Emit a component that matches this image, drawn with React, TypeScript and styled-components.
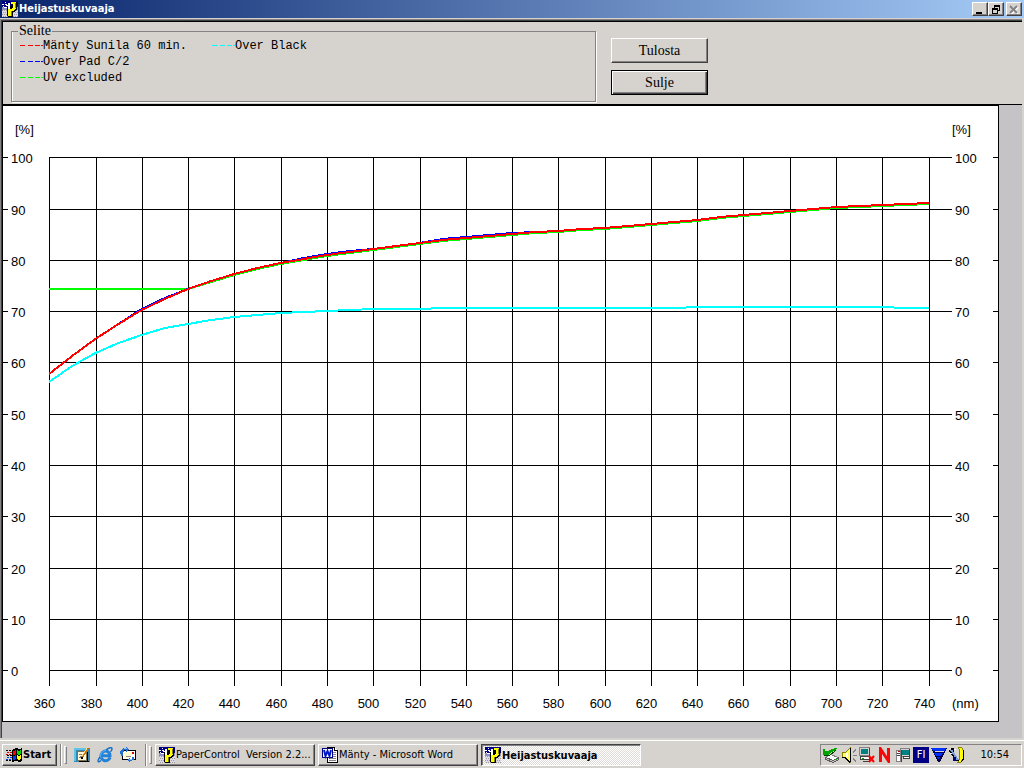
import React from "react";
import styled, { createGlobalStyle, css } from "styled-components";

const FACE = "#d6d3ce";
const NAVY = "#08246b";
const UI = `"DejaVu Sans Condensed", "DejaVu Sans", sans-serif`;
const SERIF = `"Liberation Serif", serif`;

const Global = createGlobalStyle`
  *, *::before, *::after { box-sizing: border-box; }
  body { margin: 0; background: ${FACE}; color: #000; font: 11px ${UI}; }
  button { font: inherit; color: inherit; margin: 0; padding: 0; border-radius: 0; }
  svg { display: block; flex: none; }
`;

const raised = css`
  border: 1px solid;
  border-color: #fff #424142 #424142 #fff;
  box-shadow: inset -1px -1px #848284;
  background: ${FACE};
`;

const Desktop = styled.div`
  min-height: 100vh;
  display: flex;
  flex-direction: column;
`;

const TitleBar = styled.header`
  height: 18px;
  display: flex;
  align-items: center;
  gap: 1px;
  padding: 0 2px;
  background: linear-gradient(90deg, ${NAVY}, #a5cbf7);
`;

const Title = styled.h1`
  flex: 1;
  margin: 0;
  color: #fff;
  font-size: 11px;
  line-height: 18px;
`;

const Controls = styled.div`
  display: flex;
`;

const ControlButton = styled.button<{ $apart?: boolean }>`
  ${raised}
  width: 16px;
  height: 14px;
  display: grid;
  place-items: center;
  margin-left: ${(p) => (p.$apart ? 2 : 0)}px;
`;

const Workspace = styled.main`
  flex: 1;
  margin: 1px 2px 0 0;
  padding-bottom: 16px;
  border: solid #848284;
  border-width: 1px 0 0 1px;
  box-shadow: inset 1px 1px #424142;
  padding-left: 1px;
  padding-top: 1px;
  background: #c6c3c6;
`;

const Panel = styled.section`
  display: flex;
  gap: 15px;
  min-height: 84px;
  padding: 2px 8px;
  background: ${FACE};
  border: solid #000;
  border-width: 1px 0 1px 1px;
`;

const LegendBox = styled.fieldset`
  flex: 0 1 585px;
  min-width: 0;
  height: 78px;
  margin: 0;
  padding: 0 7px;
  border: 1px solid #848284;
  box-shadow: 1px 1px #fff, inset 1px 0 #fff;
`;

const LegendTitle = styled.legend`
  margin-left: -1px;
  padding: 0 1px;
  background: ${FACE};
  font: 14px/14px ${SERIF};
`;

const LegendColumns = styled.ul`
  display: grid;
  grid-template: repeat(3, 16px) / 192px 1fr;
  grid-auto-flow: column;
  margin: 0;
  padding: 0 0 0 1px;
  list-style: none;
`;

const LegendItem = styled.li`
  display: flex;
  align-items: center;
  font: 12px/16px "Liberation Mono", monospace;
  white-space: pre;
`;

const Actions = styled.div`
  display: flex;
  flex-direction: column;
  gap: 7px;
  padding-top: 14px;
`;

const PushButton = styled.button<{ $default?: boolean }>`
  ${raised}
  width: 97px;
  height: 25px;
  font: 14px/20px ${SERIF};
  ${(p) =>
    p.$default &&
    css`
      border-color: #000;
      box-shadow: inset 1px 1px #fff, inset -1px -1px #424142, inset -2px -2px #848284;
    `}
`;

const Sheet = styled.section`
  margin-right: 23px;
  background: #fff;
  border: 1px solid #000;
`;

const Plot = styled.svg`
  width: 100%;
  height: auto;
  font: 13px "Liberation Sans", sans-serif;
`;

const Taskbar = styled.footer`
  height: 30px;
  display: flex;
  align-items: center;
  gap: 3px;
  padding: 3px 2px 0;
  background: ${FACE};
  box-shadow: inset 0 2px ${FACE}, inset 0 3px #fff;
`;

const TaskButton = styled.button<{ $active?: boolean }>`
  ${raised}
  flex: 0 1 160px;
  min-width: 0;
  height: 22px;
  display: flex;
  align-items: center;
  gap: 1px;
  padding: 0 3px;
  white-space: pre;
  overflow: hidden;
  ${(p) =>
    p.$active &&
    css`
      font-weight: bold;
      border-color: #424142 #fff #fff #424142;
      box-shadow: inset 1px 1px #848284;
      background: repeating-conic-gradient(#fff 0 25%, #dedbd6 0 50%) 0 0 / 2px 2px;
      padding-top: 1px;
    `}
`;

const StartButton = styled(TaskButton)`
  flex: 0 0 55px;
  font-weight: bold;
`;

const Grip = styled.div`
  width: 7px;
  height: 22px;
  display: flex;
  justify-content: space-between;
  &::before {
    content: "";
    width: 2px;
    background: linear-gradient(90deg, #848284 50%, #fff 50%);
  }
  &::after {
    content: "";
    width: 3px;
    margin: 2px 0;
    border: 1px solid;
    border-color: #fff #848284 #848284 #fff;
  }
`;

const QuickLaunch = styled.nav`
  display: flex;
  gap: 7px;
  width: 72px;
  padding-left: 4px;
`;

const QuickButton = styled.button`
  border: 0;
  background: none;
`;

const Tray = styled.aside`
  display: flex;
  align-items: center;
  gap: 2px;
  margin-left: auto;
  width: 202px;
  height: 22px;
  padding-left: 2px;
  border: 1px solid;
  border-color: #848284 #fff #fff #848284;
`;

const Language = styled.span`
  width: 16px;
  height: 16px;
  background: #000084;
  color: #fff;
  text-align: center;
  line-height: 16px;
`;

const Clock = styled.time`
  flex: 1;
  padding-right: 12px;
  text-align: right;
`;

function AppIcon() {
  return (
    <svg width="16" height="16" viewBox="0 0 16 16" shapeRendering="crispEdges">
      <path fill="#000084" d="M0 0h16v6H0z" />
      <path fill="#8c8ec6" d="M0 6h16v3H0z" />
      <path fill="#dedbe7" d="M0 9h16v7H0z" />
      <path stroke="#9c9a9c" strokeDasharray="1 1" d="M0 9.500h16M1 11.500h15M0 13.500h16M1 15.500h15" />
      <path stroke="#fff" d="M0 3.500h2M3 3.500h2M3 1.500h1M2 6.500h3M1 5.500h1" />
      <path fill="#000" d="M9 1h5l1 1v6l-2 3h-2v4l-1 1H6l-1-1V5h4z" />
      <path fill="#ffff00" d="M9 1h4l1 1v5l-2 3h-2v5H6V8h3l2-2V3H9z" />
      <path fill="#848200" d="M13 2h1v5h-1zM9 10h1v5H9z" />
      <path fill="#fff" d="M6 2h2v6H6zM4 4h3v1H4z" />
    </svg>
  );
}

function WindowsIcon() {
  return (
    <svg width="16" height="16" viewBox="0 0 16 16" shapeRendering="crispEdges">
      <path fill="#000" d="M6 3l4-2 3 1 3-1v13l-3 1-3-1-4 1z" />
      <path fill="#ff0000" d="M7 4l3-1v4L7 8z" />
      <path fill="#00e000" d="M11 3l2 1 2-1v4l-2 1-2-1z" />
      <path fill="#0041ff" d="M7 9l3-1v4l-3 1z" />
      <path fill="#ffff00" d="M11 8l2 1 2-1v4l-2 1-2-1z" />
      <path stroke="#000" strokeDasharray="2 1" d="M0 3.500h6M1 8.500h5M0 13.500h6" />
      <path stroke="#e00000" strokeDasharray="2 1" d="M1 5.500h5M0 7.500h5" />
      <path stroke="#0041ff" strokeDasharray="2 1" d="M1 10.500h5M0 12.500h5" />
    </svg>
  );
}

function NotepadIcon() {
  return (
    <svg width="16" height="16" viewBox="0 0 16 16" shapeRendering="crispEdges">
      <path fill="#318ab5" d="M0 1h16v14H0z" />
      <path fill="#63c3e7" d="M0 1h14v2H2v11H0z" />
      <path fill="#fff7d6" stroke="#84714a" d="M3.500 4.500h9v9h-9z" />
      <path fill="#000" d="M5 14h10v1H5zM13 5h1v9h-1z" />
      <path stroke="#848284" fill="none" d="M5 7.500h3M5.500 11.500l1-2h3" />
      <path stroke="#d67100" strokeWidth="2" d="M8 10l6-9" />
      <path stroke="#ffdf8c" d="M7.500 9.500l6-9" />
      <path fill="#000" d="M7 10h2v2H7z" />
    </svg>
  );
}

function ExplorerIcon() {
  return (
    <svg width="16" height="16" viewBox="0 0 16 16">
      <path fill="none" stroke="#2182d6" strokeWidth="3" d="M13 10.500c-1 3-4 3.700-6 3-3-1-3.700-4-2.700-6.300C5.500 4 9 3.300 11 4.700c1.600 1 2 2.500 2 4H5" />
      <path fill="none" stroke="#63b6f7" strokeWidth="1" d="M4 11C2.500 7 5 3.700 9 3.500" />
      <path fill="none" stroke="#1871c6" strokeWidth="1.500" d="M3 10C0 14 .5 16 4 13.700M9 3c3-2.500 6-3 6-1.300 0 1-.5 2-1.500 3" />
    </svg>
  );
}

function MailIcon() {
  return (
    <svg width="16" height="16" viewBox="0 0 16 16" shapeRendering="crispEdges">
      <path fill="#fff" stroke="#000" d="M2.500 3.500h13v9h-13z" />
      <path fill="#fffbce" d="M4 5h8v6H4z" />
      <path fill="#e00000" d="M12 5h2v2h-2z" />
      <path fill="none" stroke="#8c8a8c" d="M6 9.500h5" />
      <path fill="#2171d6" d="M3 1h3V0l3 2-3 3V3H4v2H2V2zM0 4h2v2h1l-1 1H0zM14 13h-2v1h-2v2l-3-3 3-3v2h2v-2h2z" />
      <path fill="#2171d6" d="M1 3h2v6H1z" />
      <path fill="#84c3ff" d="M4 1h3v1H4zM9 12h3v1H9z" />
    </svg>
  );
}

function WordIcon() {
  return (
    <svg width="16" height="16" viewBox="0 0 16 16" shapeRendering="crispEdges">
      <path fill="#fff" stroke="#000" d="M5.500.5h7l3 3v12h-10z" />
      <path fill="#fff" stroke="#000" d="M12.500.5v3h3" />
      <path stroke="#848284" d="M11 5.500h3M11 7.500h3M11 9.500h3M7 11.500h7M7 13.500h7" />
      <path fill="#fff" stroke="#000084" d="M.5 1.500h10v9H.5z" />
      <path fill="none" stroke="#0018c6" strokeWidth="2" shapeRendering="auto" d="M2 3l1.500 6L5.500 4l2 5L9 3" />
    </svg>
  );
}

function DeviceIcon() {
  return (
    <svg width="16" height="16" viewBox="0 0 16 16" shapeRendering="crispEdges">
      <path fill="#fff" stroke="#848284" d="M2.500 10.500l5-3 8 3-5 3z" />
      <path fill="#c6c3c6" stroke="#5a5a5a" d="M2.500 10.500l8 3 5-3v2l-5 3-8-3z" />
      <path fill="#00a600" d="M0 2h2v2h3l7-3h2v1L6 7v1H0z" />
      <path stroke="#004100" d="M1 8.500h5l7-5" fill="none" />
      <path fill="#00c600" d="M12 12h2v1h-2z" />
    </svg>
  );
}

function SpeakerIcon() {
  return (
    <svg width="16" height="16" viewBox="0 0 16 16" shapeRendering="crispEdges">
      <path fill="#ffff63" stroke="#848200" d="M1.500 5.500h3l5-5v15l-5-5h-3z" />
      <path fill="#fff" d="M5 6l2-2v7l-2-1z" />
      <path fill="none" stroke="#000" d="M9.500 1v14M1 10.500h3l5 5" />
      <path stroke="#848284" fill="none" d="M12 5.500l3-3M12 8.500h4M12 11.500l3 3" />
    </svg>
  );
}

function NetworkIcon() {
  return (
    <svg width="16" height="16" viewBox="0 0 16 16" shapeRendering="crispEdges">
      <path fill="#d6d3ce" stroke="#848284" d="M.5.500h10v8H.5z" />
      <path fill="#008284" d="M2 2h7v5H2z" />
      <path fill="#fff" stroke="#424142" d="M1.500 9.500h9v3h-9z" />
      <path fill="#00a600" d="M3 11h2v1H3z" />
      <path stroke="#424142" d="M4 14.500h7M10.500 1v8" />
      <path stroke="#f00" strokeWidth="2" shapeRendering="auto" d="M10 9l5 6M15 9l-5 6" />
    </svg>
  );
}

function RedZigzagIcon() {
  return (
    <svg width="16" height="16" viewBox="0 0 16 16">
      <path fill="none" stroke="#f70808" strokeWidth="3" d="M3.500 15V2l8 12V1" />
    </svg>
  );
}

function ComputerIcon() {
  return (
    <svg width="16" height="16" viewBox="0 0 16 16" shapeRendering="crispEdges">
      <path fill="#d6d3ce" stroke="#848284" d="M5.500 1.500h9v8h-9z" />
      <path fill="#008284" d="M7 3h7v5H7z" />
      <path fill="#fff" stroke="#424142" d="M8.500 9.500h6v2h-6z" />
      <path fill="#fff" stroke="#848284" d="M1.500 3.500h4v11h-4z" />
      <path stroke="#424142" d="M2 6.500h3M2 8.500h3M6.500 3v12M14.500 2v8" />
      <path fill="#c60000" d="M3 4h2v1H3z" />
    </svg>
  );
}

function TriangleIcon() {
  return (
    <svg width="16" height="16" viewBox="0 0 16 16" shapeRendering="crispEdges">
      <path fill="#000042" d="M0 1h16L9 15H7z" />
      <path fill="#0030ff" d="M0 1h15l-1 3H2zM3 6h9l-2 3H5zM6 10h3l-1 3z" />
      <path stroke="#d6d3ce" d="M4 4.500h9" />
    </svg>
  );
}

function ToolsIcon() {
  return (
    <svg width="16" height="16" viewBox="0 0 16 16" shapeRendering="crispEdges">
      <path fill="#ffff00" stroke="#848200" d="M9.500.5h3l2 3v8l-3 4h-3l2-3v-9z" />
      <path fill="none" stroke="#000" d="M14.500 3v9l-3 3.500" />
      <path stroke="#000" strokeWidth="3" d="M1 3l8 11M4 1l-1 5" />
      <path stroke="#7b9ad6" strokeWidth="2" d="M2 3l7 10" />
      <path stroke="#fff" d="M1 6.500h2M5 2.500h2" />
      <path fill="#000084" d="M4 10h3v4H4z" />
    </svg>
  );
}

type Series = { name: string; color: string; points: number[] };

// Plotted heights in chart units, one for every 10 nm from 360 to 740.
const red = [
  268, 250, 233, 218, 204, 193, 183, 175, 168, 162, 157, 153, 149, 146, 143, 140, 137, 134, 132,
  130, 128, 126, 125, 123, 122, 120, 118, 116, 114, 111, 109, 107, 105, 103, 101, 100, 99, 98, 97,
];
const series: Series[] = [
  { name: "UV excluded", color: "#00ff00", points: red.map((y, i) => (i < 6 ? 183 : i === 6 ? y : y + 1)) },
  {
    name: "Over Pad C/2",
    color: "#0000ff",
    points: red.map((y, i) => ([4, 5, 11, 12, 13, 17, 18, 19, 20].includes(i) ? y - 1 : y)),
  },
  { name: "Mänty Sunila 60 min.", color: "#ff0000", points: red },
  {
    name: "Over Black",
    color: "#00ffff",
    points: [
      276, 260, 247, 237, 229, 222, 218, 214, 211, 209, 207, 206, 205, 204, 203, 203, 203, 202, 202,
      202, 202, 202, 202, 202, 202, 202, 202, 202, 201, 201, 201, 201, 201, 201, 201, 201, 201, 202, 202,
    ],
  },
];
const legend = [
  ["Mänty Sunila 60 min.", "#ff0000"],
  ["Over Pad C/2", "#0000ff"],
  ["UV excluded", "#00ff00"],
  ["Over Black", "#00ffff"],
];

const columnX = (i: number) => Math.floor(46.77 + 46.28 * i) + 0.5;
const rowY = (i: number) => Math.floor(51.78 + 51.28 * i) + 0.5;
const columns = Array.from({ length: 20 }, (_, i) => i);
const rows = Array.from({ length: 11 }, (_, i) => i);

function ReflectanceChart() {
  return (
    <Plot viewBox="0 0 995 615" role="img" aria-label="Heijastuskuvaaja">
      <g stroke="#000" shapeRendering="crispEdges">
        {columns.map((i) => (
          <line key={i} x1={columnX(i)} x2={columnX(i)} y1="51" y2="580" />
        ))}
        {rows.map((i) => (
          <path key={i} d={`M0 ${rowY(i)}h5M46 ${rowY(i)}h903M990 ${rowY(i)}h5`} />
        ))}
      </g>
      <g fill="none" strokeWidth="2" shapeRendering="crispEdges">
        {series.map((s) => (
          <polyline
            key={s.name}
            stroke={s.color}
            points={s.points.map((y, i) => `${46 + (i * 880) / 38},${y}`).join(" ")}
          />
        ))}
      </g>
      <text x="12" y="28">[%]</text>
      <text x="949" y="28">[%]</text>
      {rows.map((i) => (
        <React.Fragment key={i}>
          <text x="8" y={rowY(i) + 5}>{100 - i * 10}</text>
          <text x="952" y={rowY(i) + 5}>{100 - i * 10}</text>
        </React.Fragment>
      ))}
      {columns.map((i) => (
        <text key={i} x={columnX(i) - 5} y="602" textAnchor="middle">
          {360 + i * 20}
        </text>
      ))}
      <text x="949" y="602">(nm)</text>
    </Plot>
  );
}

export default function App() {
  return (
    <Desktop>
      <Global />
      <TitleBar>
        <AppIcon />
        <Title>Heijastuskuvaaja</Title>
        <Controls>
          <ControlButton aria-label="Minimize">
            <svg width="10" height="9" shapeRendering="crispEdges">
              <path d="M1 7h6v2H1z" />
            </svg>
          </ControlButton>
          <ControlButton aria-label="Restore">
            <svg width="10" height="9" shapeRendering="crispEdges">
              <path d="M3 0h6v6H7V5h1V2H4v1H3zM1 3h6v6H1zM2 5v3h4V5z" fillRule="evenodd" />
            </svg>
          </ControlButton>
          <ControlButton aria-label="Close" $apart disabled>
            <svg width="10" height="9" fill="none" strokeWidth="2">
              <path stroke="#fff" d="M2 2l7 7M9 2L2 9" />
              <path stroke="#848284" d="M1 1l7 7M8 1L1 8" />
            </svg>
          </ControlButton>
        </Controls>
      </TitleBar>

      <Workspace>
        <Panel>
          <LegendBox>
            <LegendTitle>Selite</LegendTitle>
            <LegendColumns>
              {legend.map(([name, color]) => (
                <LegendItem key={name}>
                  <svg width="23" height="2" shapeRendering="crispEdges">
                    <path d="M0 .5h5M8 .5h5M15 .5h5M21 .5h2" stroke={color} />
                  </svg>
                  {name}
                </LegendItem>
              ))}
            </LegendColumns>
          </LegendBox>
          <Actions>
            <PushButton>Tulosta</PushButton>
            <PushButton $default>Sulje</PushButton>
          </Actions>
        </Panel>
        <Sheet>
          <ReflectanceChart />
        </Sheet>
      </Workspace>

      <Taskbar>
        <StartButton>
          <WindowsIcon />
          Start
        </StartButton>
        <Grip />
        <QuickLaunch>
          <QuickButton aria-label="Notepad"><NotepadIcon /></QuickButton>
          <QuickButton aria-label="Internet Explorer"><ExplorerIcon /></QuickButton>
          <QuickButton aria-label="Outlook Express"><MailIcon /></QuickButton>
        </QuickLaunch>
        <Grip />
        <TaskButton><AppIcon />PaperControl  Version 2.2...</TaskButton>
        <TaskButton><WordIcon />Mänty - Microsoft Word</TaskButton>
        <TaskButton $active><AppIcon />Heijastuskuvaaja</TaskButton>
        <Tray>
          <DeviceIcon />
          <SpeakerIcon />
          <NetworkIcon />
          <RedZigzagIcon />
          <ComputerIcon />
          <Language>FI</Language>
          <TriangleIcon />
          <ToolsIcon />
          <Clock>10:54</Clock>
        </Tray>
      </Taskbar>
    </Desktop>
  );
}
